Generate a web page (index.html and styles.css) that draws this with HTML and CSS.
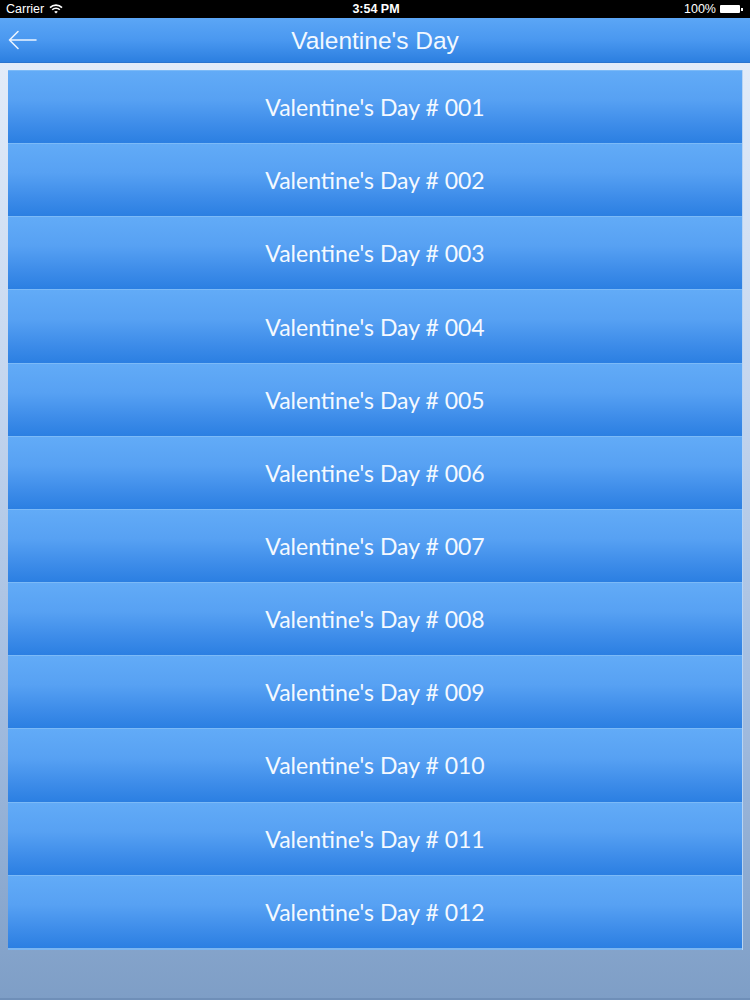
FILE: index.html
```html
<!DOCTYPE html>
<html>
<head>
<meta charset="utf-8">
<link rel="stylesheet" href="styles.css">
</head>
<body>
<div class="screen">
  <div class="status">
    <div class="st-left">Carrier
      <svg class="wifi" width="14" height="10" viewBox="0 0 14 10">
        <path d="M1 3.6 A8.5 8.5 0 0 1 13 3.6" fill="none" stroke="#fff" stroke-width="1.6"/>
        <path d="M3.2 5.8 A5.4 5.4 0 0 1 10.8 5.8" fill="none" stroke="#fff" stroke-width="1.6"/>
        <path d="M5.2 7.8 L7 9.6 L8.8 7.8 A2.6 2.6 0 0 0 5.2 7.8 Z" fill="#fff"/>
      </svg>
    </div>
    <div class="st-time">3:54 PM</div>
    <div class="st-right">100%<span class="battery"><span class="cap"></span></span></div>
  </div>
  <div class="nav">
    <svg class="back" width="30" height="20" viewBox="0 0 30 20">
      <path d="M1.5 10 H28 M1.5 10 L10 1.5 M1.5 10 L10 18.5" fill="none" stroke="#eaf3ff" stroke-width="1.6" stroke-linecap="round"/>
    </svg>
    <div class="title">Valentine's Day</div>
  </div>
  <div class="content">
    <ul class="list">
      <li class="item">Valentine's Day # 001</li>
      <li class="item">Valentine's Day # 002</li>
      <li class="item">Valentine's Day # 003</li>
      <li class="item">Valentine's Day # 004</li>
      <li class="item">Valentine's Day # 005</li>
      <li class="item">Valentine's Day # 006</li>
      <li class="item">Valentine's Day # 007</li>
      <li class="item">Valentine's Day # 008</li>
      <li class="item">Valentine's Day # 009</li>
      <li class="item">Valentine's Day # 010</li>
      <li class="item">Valentine's Day # 011</li>
      <li class="item">Valentine's Day # 012</li>
    </ul>
  </div>
  <div class="home-line"></div>
</div>
</body>
</html>
```
FILE: styles.css
```css
html, body {
  margin: 0;
  padding: 0;
}
body {
  width: 750px;
  height: 1000px;
  overflow: hidden;
  font-family: "Liberation Sans", Arial, sans-serif;
}
.screen {
  width: 750px;
  height: 1000px;
  display: flex;
  flex-direction: column;
  background: linear-gradient(to bottom, #e8f0fb 0%, #c3d5ee 40%, #9db8dc 75%, #7e9ec6 100%);
}
.status {
  height: 18px;
  background: #000;
  color: #fff;
  font-size: 12.5px;
  display: flex;
  align-items: center;
  justify-content: space-between;
  padding: 0 7px 0 6px;
  position: relative;
}
.st-left {
  display: flex;
  align-items: center;
  gap: 5px;
}
.st-time {
  position: absolute;
  left: 2px;
  right: 0;
  text-align: center;
  font-weight: bold;
  pointer-events: none;
}
.st-right {
  display: flex;
  align-items: center;
  gap: 4px;
}
.battery {
  display: inline-block;
  width: 20px;
  height: 8px;
  background: #fff;
  border-radius: 1px;
  position: relative;
  margin-right: 3px;
}
.battery .cap {
  position: absolute;
  right: -3px;
  top: 2.5px;
  width: 2px;
  height: 3px;
  background: #fff;
}
.nav {
  height: 44px;
  background: linear-gradient(to bottom, #5ba6f6 0%, #4a98f0 50%, #2c7fe0 100%);
  border-bottom: 1px solid #2a74cf;
  display: flex;
  align-items: center;
  justify-content: center;
  position: relative;
}
.back {
  position: absolute;
  left: 8px;
  top: 12px;
}
.title {
  color: #f2f8ff;
  font-size: 24.5px;
  padding-top: 2px;
}
.content {
  flex: 1;
  padding: 7px 8px 0 8px;
}
.list {
  list-style: none;
  margin: 0;
  padding: 0;
}
.item {
  height: 72.17px;
  border-top: 1px solid #7cbaf7;
  background: linear-gradient(to bottom, #62abf7 0%, #57a1f3 40%, #3d8ce9 75%, #2b7fe2 100%);
  color: #f4f9ff;
  font-family: "Lato", "Noto Sans", sans-serif;
  font-size: 23px;
  display: flex;
  align-items: center;
  justify-content: center;
  box-shadow: 1px 0 0 #b8d4f3;
}
.item:last-child {
  border-bottom: 2px solid #7cb6f0;
}
.home-line {
  height: 2px;
  background: #6f8fb8;
}
```
